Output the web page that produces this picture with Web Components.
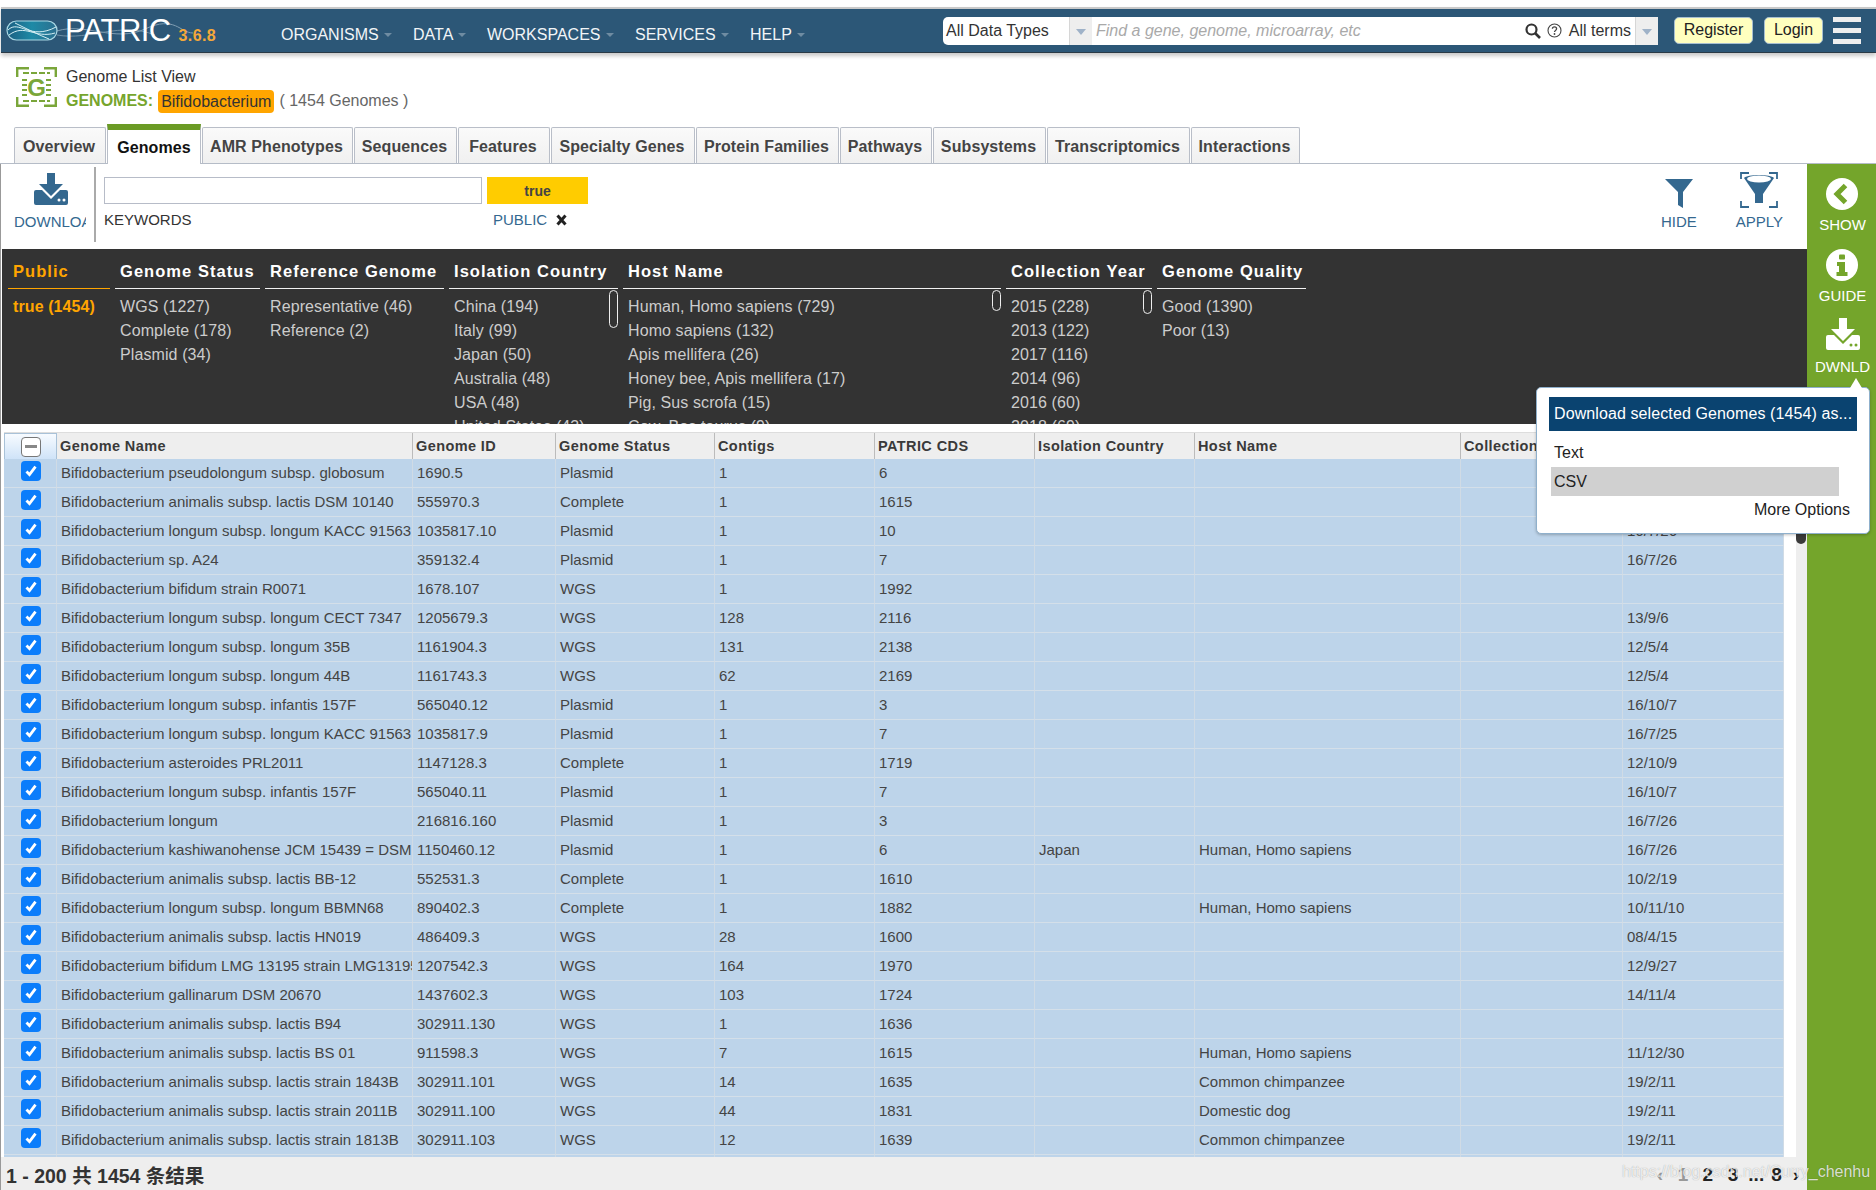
<!DOCTYPE html>
<html lang="en"><head><meta charset="utf-8"><title>PATRIC Genome List</title>
<style>
html,body{margin:0;padding:0;height:1190px;overflow:hidden;background:#fff;font-family:"Liberation Sans","Noto Sans CJK SC",sans-serif;}
</style></head><body>
<patric-app></patric-app>
<script>
const DL = (body, dots) => `<svg viewBox="0 0 34 32" width="34" height="32" aria-hidden="true"><path fill="${body}" d="M13 0h8v11h8L17 23 5 11h8z"/><path fill="${body}" d="M2 17h6l9 9 9-9h6a2 2 0 0 1 2 2v11a2 2 0 0 1-2 2H2a2 2 0 0 1-2-2V19a2 2 0 0 1 2-2z"/><circle cx="25" cy="27" r="1.5" fill="${dots}"/><circle cx="30" cy="27" r="1.5" fill="${dots}"/></svg>`;

function shadow(el, css, html){
  const r = el.attachShadow({mode:'open'});
  r.innerHTML = `<style>${css}</style>${html}`;
  return r;
}

class PatricHeader extends HTMLElement{
  connectedCallback(){
    const caret = `<i class="c"></i>`;
    const nav = ['ORGANISMS','DATA','WORKSPACES','SERVICES','HELP'].map(t=>`<span>${t}${caret}</span>`).join('');
    shadow(this,`
      :host{display:block;padding-top:7px;background:#fff}
      .bar{height:43px;margin-left:1px;background:#2c5777;border-top:2px solid #c9c9c9;border-bottom:1px solid #2a3a46;box-shadow:0 3px 4px rgba(0,0,0,.22);display:flex;align-items:center;position:relative;box-sizing:content-box}
      .logo{width:280px;height:43px;position:relative;flex:none;display:flex;align-items:center}
      .logo svg{position:absolute;left:4px;top:8px}
      .name{position:relative;margin-left:64px;font-size:31px;color:#fff;letter-spacing:-.6px;line-height:43px;margin-top:0}
      .ver{position:relative;margin-left:8px;font-size:16px;font-weight:bold;color:#f4a83a;letter-spacing:.4px;margin-top:10px}
      nav{display:grid;grid-template-columns:132px 74px 148px 115px auto;font-size:16px;color:#f2f5f7;flex:none;margin-top:9px}
      .c{display:inline-block;margin-left:5px;vertical-align:3px;border:4px solid transparent;border-top:4px solid #6f8ca2;border-bottom:0}
      .search{margin-left:auto;width:715px;height:28px;background:#fff;border-radius:5px 0 0 5px;display:flex;align-items:center;font-size:16px;color:#333;flex:none;box-sizing:border-box;padding-left:3px}
      .t{width:123px;flex:none;white-space:nowrap}
      .k{width:23px;height:28px;background:#eee;border-left:1px solid #d6d6d6;box-sizing:border-box;flex:none;display:flex;align-items:center;justify-content:center}
      .k i{border:5px solid transparent;border-top:6px solid #9fb2c8;border-bottom:0;margin-top:2px}
      .ph{margin-left:4px;flex:1;color:#a9a9a9;font-style:italic;white-space:nowrap}
      .s{flex:none;display:flex;align-items:center;margin-right:0}
      .terms{margin:0 4px 0 7px;white-space:nowrap}
      .btn{flex:none;height:27px;background:#ffffbf;border-radius:5px;border:1px solid #a7bfd1;box-sizing:border-box;font-size:16px;color:#222;display:flex;align-items:center;justify-content:center;margin-top:-1px}
      .burger{flex:none;width:28px;margin:0 15px 0 10px;display:flex;flex-direction:column;gap:6px}
      .burger b{display:block;height:5px;background:#eee}
    `,`<div class="bar">
      <div class="logo">
        <svg width="190" height="30" viewBox="0 0 190 30" aria-hidden="true">
          <defs><linearGradient id="g" x1="0" x2="1"><stop offset="0" stop-color="#1b5f82"/><stop offset=".5" stop-color="#1e8aa6"/><stop offset="1" stop-color="#2d6f8f"/></linearGradient></defs>
          <path d="M52 14C80 5 110 26 140 12S175 16 188 16" fill="none" stroke="#7f9db2" stroke-width="1"/>
          <path d="M52 18C85 24 115 4 150 18" fill="none" stroke="#6f90a6" stroke-width="1"/>
          <rect x="2" y="4" width="50" height="19" rx="9.5" fill="url(#g)" stroke="#a8d7e4" stroke-width="1.2"/>
          <path d="M3 13C14 2 25 24 51 10M4 18C20 6 30 22 50 16M10 6C22 12 34 18 44 22" fill="none" stroke="#d4eef3" stroke-width="1"/>
        </svg>
        <span class="name">PATRIC</span><span class="ver">3.6.8</span>
      </div>
      <nav>${nav}</nav>
      <div class="search">
        <span class="t">All Data Types</span><span class="k"><i></i></span>
        <span class="ph">Find a gene, genome, microarray, etc</span>
        <span class="s">
          <svg width="16" height="16" viewBox="0 0 16 16" aria-hidden="true"><circle cx="6.5" cy="6.5" r="5" fill="none" stroke="#333" stroke-width="2.2"/><path d="M10 10l5 5" stroke="#333" stroke-width="2.6"/></svg>
          <svg width="15" height="15" viewBox="0 0 15 15" style="margin-left:6px" aria-hidden="true"><circle cx="7.5" cy="7.5" r="6.5" fill="none" stroke="#444" stroke-width="1.1"/><path d="M5.4 5.8c0-2.6 4.2-2.6 4.2 0 0 1.6-2.1 1.6-2.1 3.2" fill="none" stroke="#444" stroke-width="1.3"/><circle cx="7.5" cy="11" r=".9" fill="#444"/></svg>
          <span class="terms">All terms</span>
        </span>
        <span class="k"><i></i></span>
      </div>
      <span class="btn" style="width:79px;margin-left:16px">Register</span>
      <span class="btn" style="width:59px;margin-left:11px">Login</span>
      <span class="burger"><b></b><b></b><b></b></span>
    </div>`);
  }
}

class TitleBlock extends HTMLElement{
  connectedCallback(){
    shadow(this,`
      :host{display:flex;height:71px;box-sizing:border-box;padding:14px 0 0 16px;font-size:16px;color:#333}
      svg{flex:none;margin-right:9px}
      .l1{line-height:20px;margin-bottom:2px;margin-top:0}
      .l2{display:flex;align-items:center;height:24px;white-space:nowrap;color:#666}
      b{color:#76a52d;margin-right:5px}
      .tag{background:#ffa500;color:#333;border-radius:4px;padding:0 3px;height:23px;line-height:23px;margin-right:5px}
    `,`<svg width="41" height="40" viewBox="0 0 41 40" aria-hidden="true">
        <path d="M1.200 10V1.200H13M28 1.200h11.800V10M1.200 30v8.800H13M28 38.800h11.800V30" fill="none" stroke="#7aa63a" stroke-width="2.400"/>
        <path d="M7 6h27M7 34h27" stroke="#7aa63a" stroke-width="2" stroke-dasharray="6 2"/>
        <path d="M6 13h5M6 18h5M6 23h5M6 28h5M30 13h5M30 18h5M30 23h5M30 28h5" stroke="#7aa63a" stroke-width="2"/>
        <text x="20.500" y="29" text-anchor="middle" font-family="Liberation Sans" font-weight="bold" font-size="24" fill="#7aa63a">G</text>
      </svg>
      <div><div class="l1">Genome List View</div>
      <div class="l2"><b>GENOMES:</b><span class="tag">Bifidobacterium</span>( 1454 Genomes )</div></div>`);
  }
}

class TabStrip extends HTMLElement{
  connectedCallback(){
    const tabs=[['Overview',92],['Genomes',94],['AMR Phenotypes',151],['Sequences',103],['Features',92],['Specialty Genes',144],['Protein Families',143],['Pathways',92],['Subsystems',113],['Transcriptomics',143],['Interactions',109]];
    shadow(this,`
      :host{display:grid;grid-template-columns:${tabs.map(t=>t[1]+'px').join(' ')};gap:1px;align-items:end;height:40px;box-sizing:border-box;padding-left:14px;margin-left:0;border-bottom:1px solid #b5bcc7}
      span{height:36px;box-sizing:border-box;display:flex;align-items:center;justify-content:center;font-weight:bold;font-size:16px;letter-spacing:.1px;color:#444;white-space:nowrap;background:linear-gradient(#fafafa,#f0f0f0);border:1px solid #b9bec8;border-bottom:0;border-radius:2px 2px 0 0;padding:3px 2px 0 0}
      .on{height:40px;margin-bottom:-1px;background:#fff;color:#111;border:0;border-left:1px solid #b9bec8;border-right:1px solid #b9bec8;border-top:6px solid #6b9b25;border-radius:0;padding:1px 0 0 0}
    `,tabs.map((t,i)=>`<span class="${i==1?'on':''}">${t[0]}</span>`).join(''));
  }
}

class ToolBar extends HTMLElement{
  connectedCallback(){
    shadow(this,`
      :host{display:flex;height:85px;flex:none;font-size:15px;color:#34688f;background:#fff}
      .dl{width:93px;flex:none;box-sizing:border-box;padding:9px 0 0 13px}
      .dl .ic{width:72px;display:flex;justify-content:center;margin-left:1px}
      .dl .tx{width:72px;overflow:hidden;white-space:nowrap;margin-top:8px;line-height:18px}
      .div{width:2px;flex:none;background:#aaa;margin:3px 0 7px}
      .f{margin:13px 0 0 8px;flex:none}
      .inp{width:378px;height:27px;border:1px solid #b7bcc8;box-sizing:border-box;background:#fff}
      .lab{margin-top:7px;color:#333;font-size:15px;line-height:18px}
      .g{margin:13px 0 0 5px;flex:none;width:101px}
      .true{height:27px;background:#ffcc00;font-weight:bold;font-size:14px;color:#444;display:flex;align-items:center;justify-content:center}
      .pub{margin:7px 0 0 6px;line-height:18px;display:flex;align-items:center;gap:9px;font-size:15px}
      .act{flex:none;display:flex;margin-left:auto;margin-right:24px;gap:39px;padding-top:7px}
      .a{display:flex;flex-direction:column;align-items:center;height:60px;justify-content:flex-end;line-height:18px}
      .a svg{margin-bottom:5px}
    `,`<div class="dl"><div class="ic">${DL('#34688f','#fff')}</div><div class="tx">DOWNLOAD</div></div>
      <div class="div"></div>
      <div class="f"><div class="inp"></div><div class="lab">KEYWORDS</div></div>
      <div class="g"><div class="true">true</div><div class="pub">PUBLIC <svg width="11" height="12" viewBox="0 0 11 12" aria-hidden="true"><path d="M1.500 1.500l8 9M9.500 1.500l-8 9" stroke="#222" stroke-width="3"/></svg></div></div>
      <div class="act">
        <div class="a"><svg width="28" height="29" viewBox="0 0 28 29" aria-hidden="true"><path fill="#34688f" d="M0 0h28L18 13v16l-5-3V13z"/></svg>HIDE</div>
        <div class="a"><svg width="38" height="36" viewBox="0 0 38 36" aria-hidden="true"><path d="M1 7V1h8M29 1h8v6M1 29v6h8M29 35h8v-6" fill="none" stroke="#34688f" stroke-width="1.800"/><path fill="#34688f" d="M4 6c3-4 27-4 30 0L23 22v9h-8v-9z"/><ellipse cx="19" cy="7" rx="12" ry="3.400" fill="#fff"/></svg>APPLY</div>
      </div>`);
  }
}

class FacetColumn extends HTMLElement{
  connectedCallback(){
    const w=this.getAttribute('w'), items=this.getAttribute('items').split('|'), hot=this.hasAttribute('hot');
    const th=this.getAttribute('thumb');
    shadow(this,`
      :host{display:block;flex:none;width:${w}px;position:relative;color:#ccc;font-size:16px}
      h4{margin:0;height:40px;box-sizing:border-box;padding:13px 0 0 5px;font-size:16.500px;line-height:18px;letter-spacing:1.050px;font-weight:bold;color:${hot?'#ffa500':'#fff'};border-bottom:1.500px solid ${hot?'#ffa500':'#f2f2f2'};white-space:nowrap}
      ul{list-style:none;margin:0;padding:6px 0 0 5px;letter-spacing:.1px}
      li{height:24px;line-height:24px;white-space:nowrap;${hot?'color:#ffa500;font-weight:bold':''}}
      .thumb{position:absolute;right:0;top:41px;width:9px;height:${th}px;border:1.500px solid #eee;border-radius:5px;box-sizing:border-box}
    `,`<h4>${this.getAttribute('label')}</h4><ul>${items.map(t=>`<li>${t}</li>`).join('')}</ul>${th?'<div class="thumb"></div>':''}`);
  }
}

class FacetPanel extends HTMLElement{
  connectedCallback(){
    shadow(this,`:host{display:flex;flex:none;height:175px;gap:5px;padding-left:6px;background:#333;overflow:hidden;margin-left:1px}`,`<slot></slot>`);
  }
}

class DataGrid extends HTMLElement{
  connectedCallback(){
    const cols='53px 356px 143px 159px 160px 160px 160px 266px 162px 161px';
    const rows=[
['Bifidobacterium pseudolongum subsp. globosum','1690.5','Plasmid','1','6','','',''],
['Bifidobacterium animalis subsp. lactis DSM 10140','555970.3','Complete','1','1615','','',''],
['Bifidobacterium longum subsp. longum KACC 91563','1035817.10','Plasmid','1','10','','','16/7/26'],
['Bifidobacterium sp. A24','359132.4','Plasmid','1','7','','','16/7/26'],
['Bifidobacterium bifidum strain R0071','1678.107','WGS','1','1992','','',''],
['Bifidobacterium longum subsp. longum CECT 7347','1205679.3','WGS','128','2116','','','13/9/6'],
['Bifidobacterium longum subsp. longum 35B','1161904.3','WGS','131','2138','','','12/5/4'],
['Bifidobacterium longum subsp. longum 44B','1161743.3','WGS','62','2169','','','12/5/4'],
['Bifidobacterium longum subsp. infantis 157F','565040.12','Plasmid','1','3','','','16/10/7'],
['Bifidobacterium longum subsp. longum KACC 91563','1035817.9','Plasmid','1','7','','','16/7/25'],
['Bifidobacterium asteroides PRL2011','1147128.3','Complete','1','1719','','','12/10/9'],
['Bifidobacterium longum subsp. infantis 157F','565040.11','Plasmid','1','7','','','16/10/7'],
['Bifidobacterium longum','216816.160','Plasmid','1','3','','','16/7/26'],
['Bifidobacterium kashiwanohense JCM 15439 = DSM 21854','1150460.12','Plasmid','1','6','Japan','Human, Homo sapiens','16/7/26'],
['Bifidobacterium animalis subsp. lactis BB-12','552531.3','Complete','1','1610','','','10/2/19'],
['Bifidobacterium longum subsp. longum BBMN68','890402.3','Complete','1','1882','','Human, Homo sapiens','10/11/10'],
['Bifidobacterium animalis subsp. lactis HN019','486409.3','WGS','28','1600','','','08/4/15'],
['Bifidobacterium bifidum LMG 13195 strain LMG13195','1207542.3','WGS','164','1970','','','12/9/27'],
['Bifidobacterium gallinarum DSM 20670','1437602.3','WGS','103','1724','','','14/11/4'],
['Bifidobacterium animalis subsp. lactis B94','302911.130','WGS','1','1636','','',''],
['Bifidobacterium animalis subsp. lactis BS 01','911598.3','WGS','7','1615','','Human, Homo sapiens','11/12/30'],
['Bifidobacterium animalis subsp. lactis strain 1843B','302911.101','WGS','14','1635','','Common chimpanzee','19/2/11'],
['Bifidobacterium animalis subsp. lactis strain 2011B','302911.100','WGS','44','1831','','Domestic dog','19/2/11'],
['Bifidobacterium animalis subsp. lactis strain 1813B','302911.103','WGS','12','1639','','Common chimpanzee','19/2/11']];
    const check=`<span class="cb"><svg width="14" height="14" viewBox="0 0 14 14" aria-hidden="true"><path d="M2.500 7.500l3 3.200 6-8" fill="none" stroke="#fff" stroke-width="2.800"/></svg></span>`;
    const row=r=>`<div class="r"><div class="cell ck">${check}</div>`+
      [r[0],r[1],r[2],r[3],r[4],r[5],r[6],'',r[7]].map(t=>`<div class="cell">${t}</div>`).join('')+`</div>`;
    const heads=['Genome Name','Genome ID','Genome Status','Contigs','PATRIC CDS','Isolation Country','Host Name','Collection',''];
    shadow(this,`
      :host{display:block;flex:none;height:725px;margin-top:8px;padding-left:3px;position:relative;overflow:hidden;background:#fff;font-size:15px;color:#444}
      .track{position:absolute;right:0;top:0;bottom:0;width:11px;background:#eee}
      .thumb{position:absolute;right:1px;top:50px;height:62px;width:10px;background:#3a3a3a;border-radius:5px}
      .w{width:1780px}
      .r{display:grid;grid-template-columns:${cols};height:29px;background:#bdd4ea;border-bottom:0}
      .cell{box-sizing:border-box;height:29px;padding:0 0 0 4px;line-height:28px;white-space:nowrap;overflow:hidden;border-right:1px solid #d0dbe5;border-bottom:1.500px solid #d4dfe9}
      .ck{display:flex;align-items:flex-start;justify-content:center;padding:2px 0 0 1px;background:none}
      .cb{width:20px;height:20px;background:#0b7dfb;border-radius:4px;display:flex;align-items:center;justify-content:center;margin-top:0}
      .h{display:grid;grid-template-columns:${cols};height:26px;background:#eee;border-top:1px solid #ddd;box-sizing:content-box}
      .h div{box-sizing:border-box;padding:0 0 0 3px;line-height:26px;font-weight:bold;letter-spacing:.400px;font-size:14.500px;color:#3a3a3a;white-space:nowrap;overflow:hidden;border-right:1px solid #bbb}
      .h .hc{padding:0 0 0 1px;display:flex;align-items:center;justify-content:center;background:linear-gradient(#f7fbff,#cfe3f8);border:1px solid #a9c2d8;border-bottom:0}
      .hb{width:20px;height:20px;background:#fff;border:1.500px solid #777;border-radius:4px;box-sizing:border-box;display:flex;align-items:center;justify-content:center}
      .hb i{display:block;width:12px;height:3px;background:#888}
    `,`<div class="track"><div class="thumb"></div></div><div class="w">
      <div class="h"><div class="hc"><span class="hb"><i></i></span></div>${heads.map(h=>`<div>${h}</div>`).join('')}</div>
      ${rows.map(row).join('')}<div class="r">${'<div class="cell"></div>'.repeat(10)}</div>
    </div>`);
  }
}

class GridFooter extends HTMLElement{
  connectedCallback(){
    shadow(this,`
      :host{display:flex;flex:1;align-items:center;background:#eee;padding:2px 1px 0 5px;font-weight:bold;font-size:19.500px;color:#333;font-family:"Liberation Sans","Noto Sans CJK SC",sans-serif;white-space:nowrap}
      .p{margin-left:auto;display:flex;gap:0;font-size:19px;color:#222}
      .p span{display:block;text-align:center}
      .d{color:#999}
    `,`<span>1 - 200 共 1454 条结果</span>
      <span class="p"><span class="d" style="width:22px">‹</span><span class="d" style="width:24px">1</span><span style="width:25.500px">2</span><span style="width:25px">3</span><span style="width:21.500px">...</span><span style="width:19px">8</span><span style="width:20px">›</span></span>`);
  }
}

class SideRail extends HTMLElement{
  connectedCallback(){
    shadow(this,`
      :host{display:flex;flex-direction:column;align-items:center;flex:none;width:69px;background:#74a52b;color:#fff;font-size:15px;box-sizing:border-box;padding:14px 0 0 2px}
      .b{display:flex;flex-direction:column;align-items:center;height:71px}
      .l{line-height:18px;margin-top:6px}
      svg{display:block;flex:none}
    `,`<div class="b"><svg width="32" height="32" viewBox="0 0 32 32" aria-hidden="true"><circle cx="16" cy="16" r="16" fill="#fff"/><path d="M19.500 7.500L11 16l8.500 8.500" fill="none" stroke="#74a52b" stroke-width="5"/></svg><div class="l">SHOW</div></div>
      <div class="b"><svg width="32" height="32" viewBox="0 0 32 32" aria-hidden="true"><circle cx="16" cy="16" r="16" fill="#fff"/><rect x="13" y="5.500" width="6" height="5" rx="1" fill="#74a52b"/><path d="M11 13h8v10h2.500v4H10.500v-4H13v-6h-2z" fill="#74a52b"/></svg><div class="l">GUIDE</div></div>
      <div class="b" style="height:auto;margin-top:-2px">${DL('#fff','#74a52b')}<div class="l" style="margin-top:8px">DWNLD</div></div>`);
  }
}

class DownloadPopup extends HTMLElement{
  connectedCallback(){
    shadow(this,`
      :host{display:block;position:absolute;left:1536px;top:223px;width:334px;height:147px;box-sizing:border-box;background:#fff;border:1px solid #8fb0cc;border-radius:5px;box-shadow:0 1px 3px rgba(0,0,0,.25);padding:9px 12px 0 12px;font-size:16px;color:#222}
      .ar{position:absolute;right:7px;top:-10px;width:0;height:0;border:6px solid transparent;border-bottom:10px solid #fff;border-top:0}
      .t{height:34px;line-height:34px;background:#0a4370;color:#fff;padding-left:5px;white-space:nowrap;overflow:hidden;letter-spacing:.1px}
      .i{height:29px;line-height:29px;padding-left:3px;margin-left:2px;width:288px;box-sizing:border-box}
      .on{background:#d0d0d0}
      .m{text-align:right;line-height:28px;padding-right:7px;color:#222}
    `,`<div class="ar"></div><div class="t">Download selected Genomes (1454) as...</div><div class="i" style="margin-top:7px">Text</div><div class="i on">CSV</div><div class="m">More Options</div>`);
  }
}

class PatricApp extends HTMLElement{
  connectedCallback(){
    shadow(this,`
      :host{display:flex;flex-direction:column;width:1876px;height:1190px;overflow:hidden;position:relative}
      .main{display:flex;flex:1;position:relative;min-height:0}
      .col{flex:1;min-width:0;display:flex;flex-direction:column;border-left:1px solid #999;box-sizing:border-box}
      .wm{position:absolute;left:1622px;bottom:9px;font-size:16px;color:rgba(255,255,255,.8);text-shadow:0 0 1px rgba(0,0,0,.35);white-space:nowrap;font-family:"Liberation Sans",sans-serif}
    `,`<patric-header></patric-header><title-block></title-block><tab-strip></tab-strip>
    <div class="main">
      <div class="col">
        <tool-bar></tool-bar>
        <facet-panel>
          <facet-column w="102" hot label="Public" items="true (1454)"></facet-column>
          <facet-column w="145" label="Genome Status" items="WGS (1227)|Complete (178)|Plasmid (34)"></facet-column>
          <facet-column w="179" label="Reference Genome" items="Representative (46)|Reference (2)"></facet-column>
          <facet-column w="169" thumb="38" label="Isolation Country" items="China (194)|Italy (99)|Japan (50)|Australia (48)|USA (48)|United States (43)"></facet-column>
          <facet-column w="378" thumb="21" label="Host Name" items="Human, Homo sapiens (729)|Homo sapiens (132)|Apis mellifera (26)|Honey bee, Apis mellifera (17)|Pig, Sus scrofa (15)|Cow, Bos taurus (9)"></facet-column>
          <facet-column w="146" thumb="24" label="Collection Year" items="2015 (228)|2013 (122)|2017 (116)|2014 (96)|2016 (60)|2018 (69)"></facet-column>
          <facet-column w="149" label="Genome Quality" items="Good (1390)|Poor (13)"></facet-column>
        </facet-panel>
        <data-grid></data-grid>
        <grid-footer></grid-footer>
      </div>
      <side-rail></side-rail>
      <download-popup></download-popup>
      <div class="wm">https://blog.csdn.net/Curry_chenhu</div>
    </div>`);
  }
}
customElements.define('patric-header',PatricHeader);
customElements.define('title-block',TitleBlock);
customElements.define('tab-strip',TabStrip);
customElements.define('tool-bar',ToolBar);
customElements.define('facet-column',FacetColumn);
customElements.define('facet-panel',FacetPanel);
customElements.define('data-grid',DataGrid);
customElements.define('grid-footer',GridFooter);
customElements.define('side-rail',SideRail);
customElements.define('download-popup',DownloadPopup);
customElements.define('patric-app',PatricApp);
</script>
</body></html>
